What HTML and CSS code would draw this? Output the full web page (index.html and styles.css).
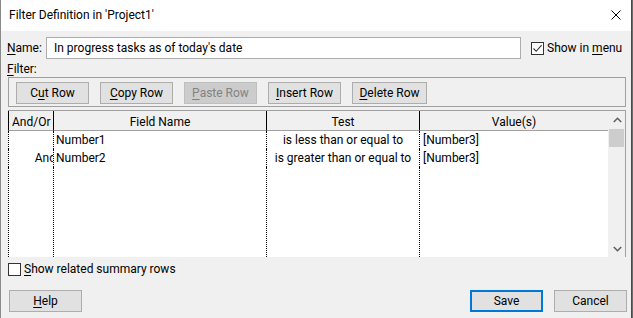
FILE: index.html
```html
<!DOCTYPE html>
<html lang="en">

<head>
    <meta name="viewport" content="width=device-width, initial-scale=1.0">
    <meta charset="UTF-8">
    <title>Filter Definition</title>
    <link rel="stylesheet" href="styles.css">
</head>

<body>
    <!-- The whole dialog window -->
    <div class="dialog">
        <div class="titlebar">
            <span class="title-text">Filter Definition in 'Project1'</span>
            <svg class="close-icon" width="10" height="10" viewBox="0 0 10 10">
                <path d="M0.5 0.5 L9.5 9.5 M9.5 0.5 L0.5 9.5" stroke="#000" stroke-width="1" fill="none" />
            </svg>
        </div>

        <div class="dialog-body">
            <!-- Name of the filter and the "Show in menu" option -->
            <div class="name-row">
                <label class="name-label"><u>N</u>ame:</label>
                <div class="name-input">In progress tasks as of today's date</div>
                <span class="checkbox">
                    <svg width="11" height="11" viewBox="0 0 11 11">
                        <path d="M1.5 5.5 L4.2 8.3 L9.6 2.2" stroke="#333" stroke-width="1.1" fill="none" />
                    </svg>
                </span>
                <span class="checkbox-text">Show in <u>m</u>enu</span>
            </div>

            <div class="filter-label"><u>F</u>ilter:</div>

            <!-- Row editing buttons -->
            <div class="toolbar">
                <button class="btn">C<u>u</u>t Row</button>
                <button class="btn"><u>C</u>opy Row</button>
                <button class="btn btn-disabled"><u>P</u>aste Row</button>
                <button class="btn"><u>I</u>nsert Row</button>
                <button class="btn btn-wide"><u>D</u>elete Row</button>
            </div>

            <!-- The filter grid -->
            <div class="grid">
                <div class="grid-table">
                    <div class="head-cell head-first">And/Or</div>
                    <div class="head-cell head-center">Field Name</div>
                    <div class="head-cell head-center">Test</div>
                    <div class="head-cell head-center head-last">Value(s)</div>

                    <div class="cell cell-first cell-right"></div>
                    <div class="cell">Number1</div>
                    <div class="cell cell-center">is less than or equal to</div>
                    <div class="cell cell-last">[Number3]</div>

                    <div class="cell cell-first cell-right"><span class="clipped">And</span></div>
                    <div class="cell">Number2</div>
                    <div class="cell cell-center">is greater than or equal to</div>
                    <div class="cell cell-last">[Number3]</div>

                    <div class="cell cell-first"></div>
                    <div class="cell"></div>
                    <div class="cell"></div>
                    <div class="cell cell-last"></div>
                </div>

                <div class="scrollbar">
                    <div class="scroll-arrow">
                        <svg width="9" height="6" viewBox="0 0 9 6">
                            <path d="M0.8 5 L4.5 1.3 L8.2 5" stroke="#606060" stroke-width="1.6" fill="none" />
                        </svg>
                    </div>
                    <div class="scroll-thumb"></div>
                    <div class="scroll-track"></div>
                    <div class="scroll-arrow">
                        <svg width="9" height="6" viewBox="0 0 9 6">
                            <path d="M0.8 1 L4.5 4.7 L8.2 1" stroke="#606060" stroke-width="1.6" fill="none" />
                        </svg>
                    </div>
                </div>
            </div>

            <div class="summary-row">
                <span class="checkbox"></span>
                <span class="checkbox-text"><u>S</u>how related summary rows</span>
            </div>

            <!-- Dialog buttons -->
            <div class="footer">
                <button class="btn"><u>H</u>elp</button>
                <div class="footer-right">
                    <button class="btn btn-default">Save</button>
                    <button class="btn">Cancel</button>
                </div>
            </div>
        </div>
    </div>
</body>

</html>
```

FILE: styles.css
```css
body {
    margin: 0;
    /* Removes the default margin */
    background-color: #6d6d6d;
    /* Desktop colour behind the window */
    font-family: Roboto, "Noto Sans", sans-serif;
    font-size: 12px;
    color: #000;
}

u {
    text-underline-offset: 2px;
    /* Keeps the access key underline under the letter */
}

/* The dialog window */
.dialog {
    width: 630px;
    height: 318px;
    border-left: 1px solid #8a8a8a;
    border-right: 1px solid #4a4a4a;
    background-color: #f0f0f0;
    display: flex;
    flex-direction: column;
}

.titlebar {
    height: 31px;
    background-color: #fff;
    display: flex;
    align-items: center;
    justify-content: space-between;
    padding: 0 10px 0 8px;
    flex-shrink: 0;
}

.title-text {
    padding-bottom: 2px;
}

.close-icon {
    margin-bottom: 2px;
}

.dialog-body {
    display: flex;
    flex-direction: column;
    padding: 0 6px 0 7px;
}

/* Name row */
.name-row {
    display: flex;
    align-items: center;
    margin-top: 6px;
    height: 22px;
    white-space: nowrap;
}

.name-label {
    width: 39px;
    margin-left: -1px;
}

.name-input {
    width: 466px;
    height: 20px;
    line-height: 20px;
    border: 1px solid #adadad;
    background-color: #fff;
    padding-left: 7px;
    margin-right: 10px;
    flex-shrink: 0;
}

.checkbox {
    width: 11px;
    height: 11px;
    border: 1px solid #333;
    background-color: #fff;
    display: flex;
    align-items: center;
    justify-content: center;
    flex-shrink: 0;
}

.checkbox-text {
    margin-left: 3px;
    white-space: nowrap;
}

.filter-label {
    height: 16px;
    line-height: 16px;
    margin-top: 2px;
    margin-left: -1px;
}

/* Toolbar with the row buttons */
.toolbar {
    height: 24px;
    border: 1px solid #a0a0a0;
    display: flex;
    gap: 11px;
    padding: 4px 0 0 7px;
    box-sizing: content-box;
    width: 609px;
}

.btn {
    font-family: inherit;
    font-size: 12px;
    color: #000;
    width: 73px;
    height: 22px;
    padding: 0;
    border: 1px solid #adadad;
    background-color: #e1e1e1;
}

.btn-wide {
    width: 75px;
}

.btn-disabled {
    background-color: #cccccc;
    border-color: #bfbfbf;
    color: #838383;
}

.btn-default {
    border: 2px solid #0078d7;
}

/* The filter grid */
.grid {
    display: flex;
    margin-top: 3px;
    width: 617px;
    height: 146px;
    border-top: 1px solid #a0a0a0;
    border-right: 1px solid #a0a0a0;
}

.grid-table {
    flex: 1;
    display: grid;
    grid-template-columns: 46px 213px 153px 1fr;
    grid-template-rows: 20px 18px 18px 1fr;
    background-color: #fff;
}

.head-cell {
    background-color: #f0f0f0;
    border-right: 1px solid #000;
    border-bottom: 1px solid #a0a0a0;
    line-height: 19px;
    padding-top: 2px;
    box-sizing: border-box;
    overflow: hidden;
    white-space: nowrap;
}

.head-first {
    border-left: 1px solid #000;
    padding-left: 3px;
}

.head-center {
    text-align: center;
}

.head-last {
    border-right: none;
}

.cell {
    border-right: 1px dotted #000;
    line-height: 18px;
    padding-left: 2px;
    overflow: hidden;
    white-space: nowrap;
}

.cell-first {
    border-left: 1px dotted #000;
    padding-left: 0;
}

.cell-right {
    text-align: right;
}

.clipped {
    display: inline-block;
    margin-right: -3px;
    /* Pushes the last letter past the column edge, like the original grid */
}

.cell-center {
    text-align: center;
    padding-left: 0;
}

.cell-last {
    border-right: none;
    padding-left: 3px;
}

/* Vertical scrollbar */
.scrollbar {
    width: 17px;
    height: 147px;
    background-color: #f0f0f0;
    border-left: 1px solid #f0f0f0;
    display: flex;
    flex-direction: column;
    box-sizing: border-box;
}

.scroll-arrow {
    height: 18px;
    display: flex;
    align-items: center;
    justify-content: center;
}

.scroll-thumb {
    height: 18px;
    margin: 0 1px 0 0;
    background-color: #cdcdcd;
}

.scroll-track {
    flex: 1;
}

/* Show related summary rows */
.summary-row {
    display: flex;
    align-items: center;
    margin-top: 5px;
    height: 14px;
}

/* Bottom buttons */
.footer {
    display: flex;
    justify-content: space-between;
    margin-top: 14px;
    width: 618px;
    padding-left: 1px;
}

.footer-right {
    display: flex;
    gap: 11px;
}
```
